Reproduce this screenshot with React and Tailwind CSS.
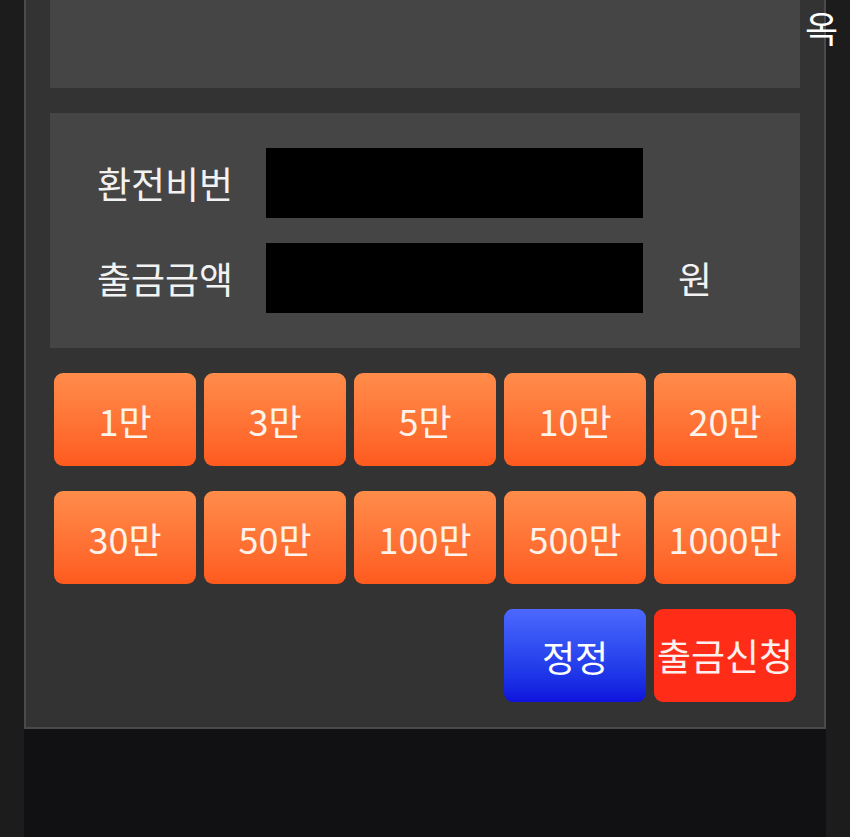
import React from "react";

const AMOUNTS = [
  ["1만", "3만", "5만", "10만", "20만"],
  ["30만", "50만", "100만", "500만", "1000만"],
];

const font = { fontFamily: '"Noto Sans CJK KR", "Noto Sans", sans-serif' };

const App = () => {
  return (
    <div className="relative min-h-[837px] w-[850px] bg-[#1c1c1c] overflow-hidden" style={font}>
      <div className="ml-[24px] w-[802px] min-h-[837px] bg-[#111114]">
        {/* Withdraw panel */}
        <div className="bg-[#333333] border-x-2 border-b-2 border-[#4a4a4a] px-[24px] pb-[25px] flex flex-col gap-[25px]">
          <div className="h-[88px] bg-[#454545]" />

          <div className="bg-[#454545] pl-[47px] py-[35px] flex flex-col gap-[25px]">
            <div className="flex items-center h-[70px]">
              <span className="w-[169px] text-[37px] leading-none text-[#f2f2f2]">환전비번</span>
              <div className="w-[377px] h-[70px] bg-black" />
            </div>
            <div className="flex items-center h-[70px]">
              <span className="w-[169px] text-[37px] leading-none text-[#f2f2f2]">출금금액</span>
              <div className="w-[377px] h-[70px] bg-black" />
              <span className="ml-[35px] text-[37px] leading-none text-[#f2f2f2]">원</span>
            </div>
          </div>

          {AMOUNTS.map((row, i) => (
            <div key={i} className="grid grid-cols-5 gap-[8px] px-[4px]">
              {row.map((a) => (
                <button
                  key={a}
                  className="h-[93px] rounded-[9px] bg-gradient-to-b from-[#ff8c4a] to-[#ff5a1e] text-[36px] text-[#fdf3ea] leading-none whitespace-nowrap"
                >
                  {a}
                </button>
              ))}
            </div>
          ))}

          <div className="grid grid-cols-5 gap-[8px] px-[4px]">
            <div className="col-span-3" />
            <button className="h-[93px] rounded-[9px] bg-gradient-to-b from-[#4c68ff] to-[#1010dd] text-[36px] text-white leading-none">
              정정
            </button>
            <button className="h-[93px] rounded-[9px] bg-[#ff2d17] text-[37px] text-[#fdf0ee] leading-none whitespace-nowrap">
              출금신청
            </button>
          </div>
        </div>
      </div>

      {/* overflowing label at the top right */}
      <span className="absolute left-[805px] top-[9px] text-[36px] leading-none text-white">옥</span>
    </div>
  );
};

export default App;
